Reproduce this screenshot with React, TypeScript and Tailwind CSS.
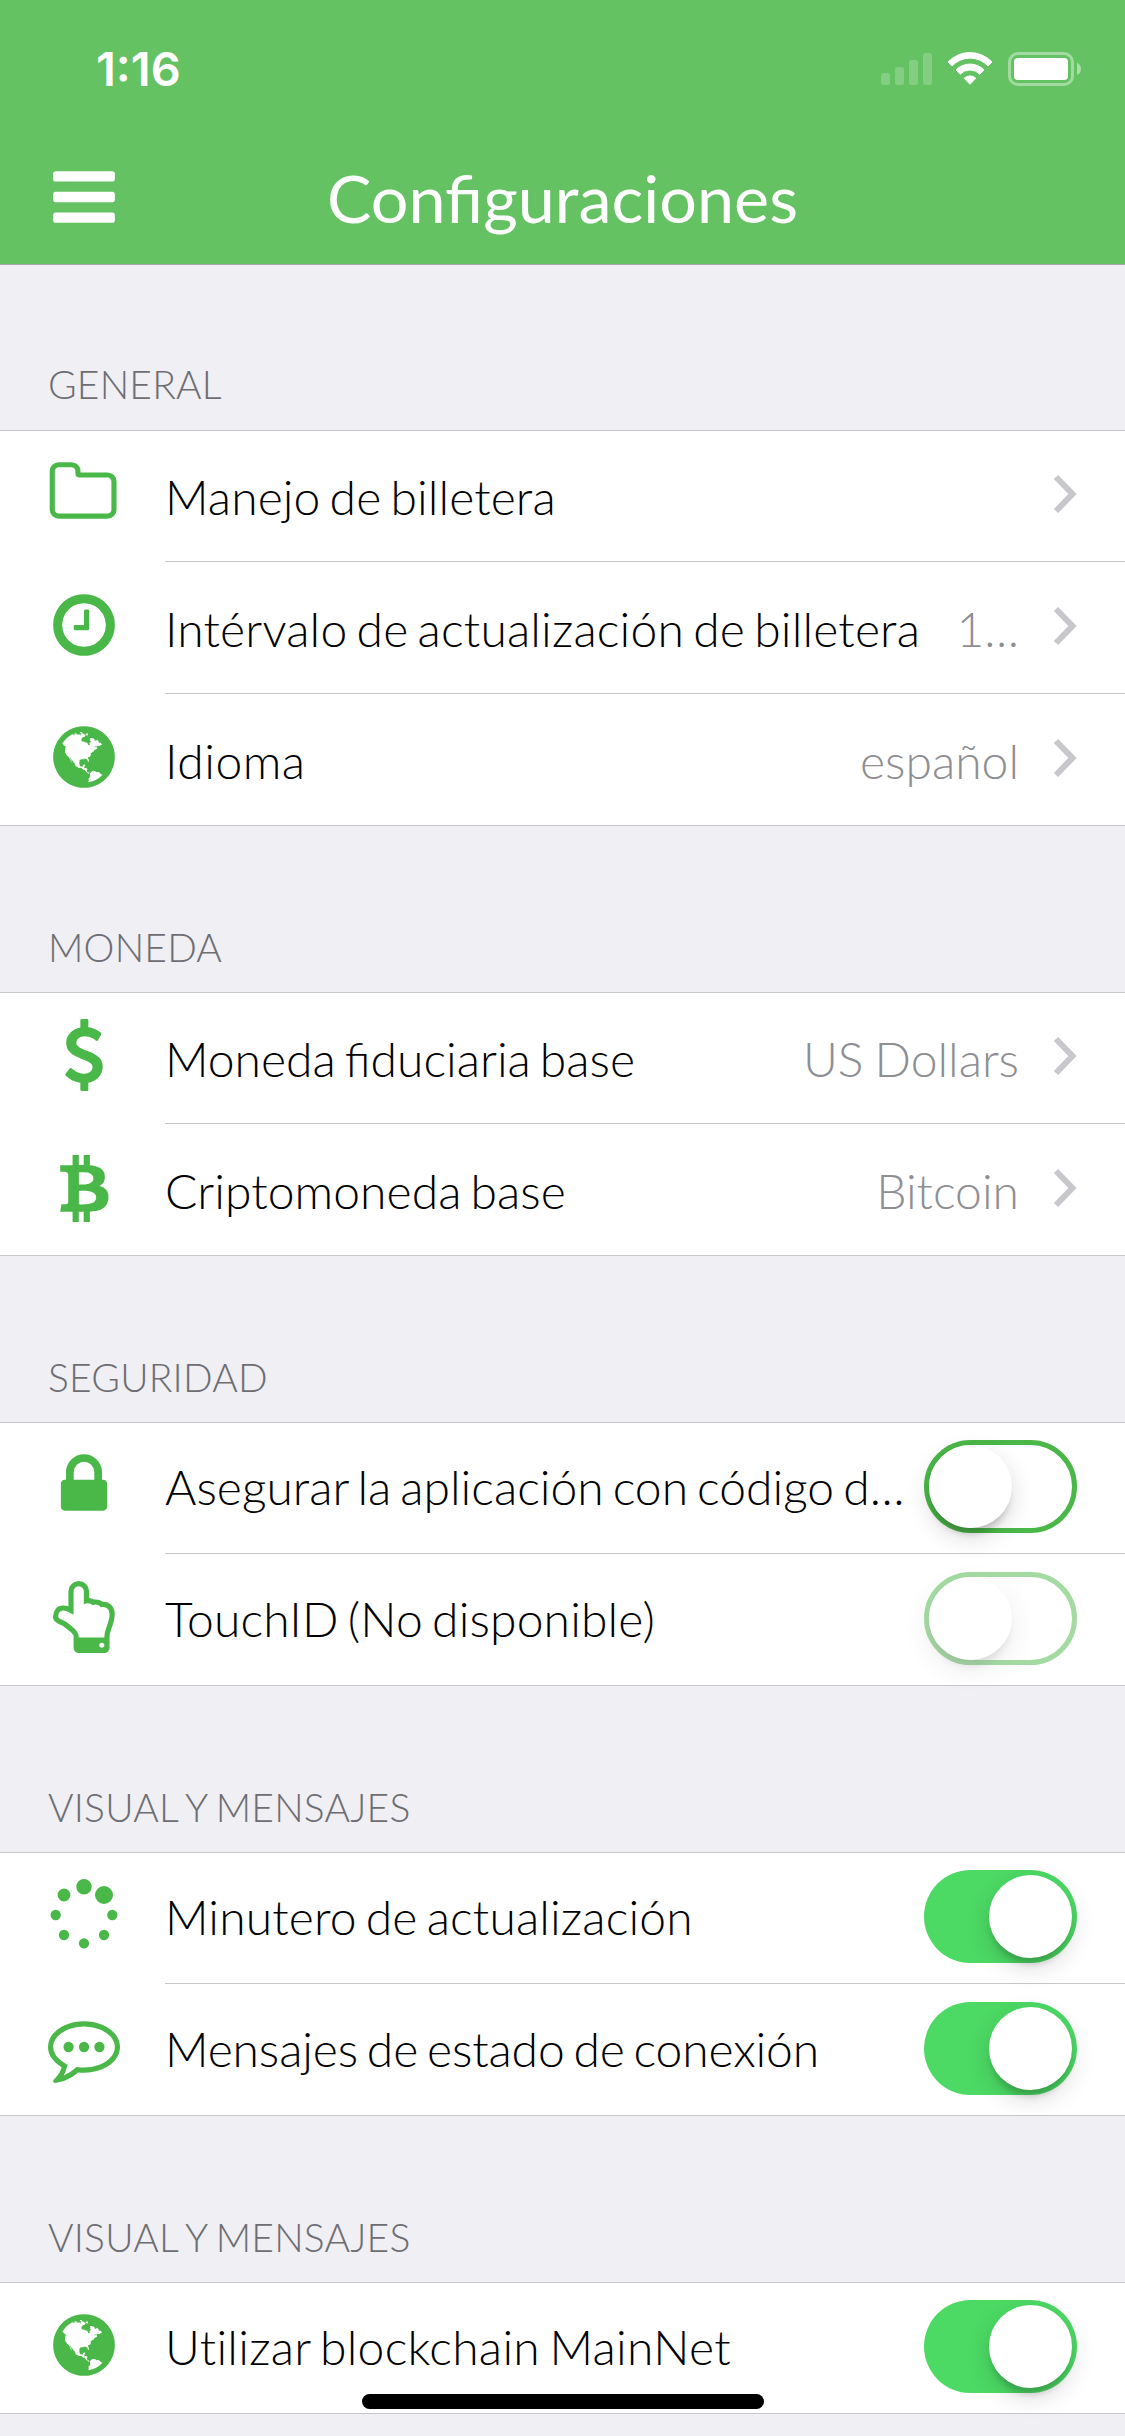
import React from "react";

const PATHS = {
  folder:
    "M1600 1312v-704q0-40-28-68t-68-28h-704q-40 0-68-28t-28-68v-64q0-40-28-68t-68-28h-320q-40 0-68 28t-28 68v960q0 40 28 68t68 28h1216q40 0 68-28t28-68zm128-704v704q0 92-66 158t-158 66h-1216q-92 0-158-66t-66-158v-960q0-92 66-158t158-66h320q92 0 158 66t66 158v32h672q92 0 158 66t66 158z",
  clock:
    "M1024 544v448q0 14-9 23t-23 9h-320q-14 0-23-9t-9-23v-64q0-14 9-23t23-9h224v-352q0-14 9-23t23-9h64q14 0 23 9t9 23zm416 352q0-148-73-273t-198-198-273-73-273 73-198 198-73 273 73 273 198 198 273 73 273-73 198-198 73-273zm224 0q0 209-103 385.5t-279.5 279.5-385.5 103-385.5-103-279.5-279.5-103-385.5 103-385.5 279.5-279.5 385.5-103 385.5 103 279.5 279.5 103 385.5z",
  globe:
    "M896 128q209 0 385.5 103t279.5 279.5 103 385.5-103 385.5-279.5 279.5-385.5 103-385.5-103-279.5-279.5-103-385.5 103-385.5 279.5-279.5 385.5-103zm274 521q-2 1-9.5 9.5t-13.5 9.5q2 0 4.5-5t5-11 3.5-7q6-7 22-15 14-6 52-12 34-8 51 11-2-2 9.5-13t14.5-12q3-2 15-4.5t15-7.5l2-22q-12 1-17.5-7t-6.5-21q0 2-6 8 0-7-4.5-8t-11.5 1-9 1q-10-3-15-7.5t-8-16.5-4-15q-2-5-9.5-11t-9.5-10q-1-2-2.5-5.5t-3-6.5-4-5.5-5.5-2.5-7 5-7.5 10-4.5 5q-3-2-6-1.5t-4.5 1-4.5 3-5 3.5q-3 2-8.5 3t-8.5 2q15-5-1-11-10-4-16-3 9-4 7.5-12t-8.5-14h5q-1-4-8.5-8.5t-17.5-8.5-13-6q-8-5-34-9.5t-33-.5q-5 6-4.5 10.5t4 14 3.5 12.5q1 6-5.5 13t-6.5 12q0 7 14 15.5t10 21.5q-3 8-16 16t-16 12q-5 8-1.5 18.5t10.5 16.5q2 2 1.5 4t-3.5 4.5-5.5 4-6.5 3.5l-3 2q-11 5-20.5-6t-13.5-26q-7-25-16-30-23-8-29 1-5-13-41-26-25-9-58-4 6-1 0-15-7-15-19-12 3-6 4-17.5t1-13.5q3-13 12-23 1-1 7-8.5t9.5-13.5.5-6q35 4 50-11 5-5 11.5-17t10.5-17q9-6 14-5.5t14.5 5.5 14.5 5q14 1 15.5-11t-7.5-20q12 1 3-17-4-7-8-9-12-4-27 5-8 4 2 8-1-1-9.5 10.5t-16.5 17.5-16-5q-1-1-5.5-13.5t-9.5-13.5q-8 0-16 15 3-8-11-15t-24-8q19-12-8-27-7-4-20.5-5t-19.5 4q-5 7-5.5 11.5t5 8 10.5 5.5 11.5 4 8.5 3q14 10 8 14-2 1-8.5 3.5t-11.5 4.5-6 4q-3 4 0 14t-2 14q-5-5-9-17.5t-7-16.5q7 9-25 6l-10-1q-4 0-16 2t-20.5 1-13.5-8q-4-8 0-20 1-4 4-2-4-3-11-9.5t-10-8.5q-46 15-94 41 6 1 12-1 5-2 13-6.5t10-5.5q34-14 42-7l5-5q14 16 20 25-7-4-30-1-20 6-22 12 7 12 5 18-4-3-11.5-10t-14.5-11-15-5q-16 0-22 1-146 80-235 222 7 7 12 8 4 1 5 9t2.5 11 11.5-3q9 8 3 19 1-1 44 27 19 17 21 21 3 11-10 18-1-2-9-9t-9-4q-3 5 .5 18.5t10.5 12.5q-7 0-9.5 16t-2.5 35.5-1 23.5l2 1q-3 12 5.5 34.5t21.5 19.5q-13 3 20 43 6 8 8 9 3 2 12 7.5t15 10 10 10.5q4 5 10 22.5t14 23.5q-2 6 9.5 20t10.5 23q-1 0-2.5 1t-2.5 1q3 7 15.5 14t15.5 13q1 3 2 10t3 11 8 2q2-20-24-62-15-25-17-29-3-5-5.5-15.5t-4.5-14.5q2 0 6 1.5t8.5 3.5 7.5 4 2 3q-3 7 2 17.5t12 18.5 17 19 12 13q6 6 14 19.5t0 13.5q9 0 20 10.5t17 19.5q5 8 8 26t5 24q2 7 8.5 13.5t12.5 9.5l16 8 13 7q5 2 18.5 10.5t21.5 11.5q10 4 16 4t14.5-2.5 13.5-3.5q15-2 29 15t21 21q36 19 55 11-2 1 .5 7.5t8 15.5 9 14.5 5.5 8.5q5 6 18 15t18 15q6-4 7-9-3 8 7 20t18 10q14-3 14-32-31 15-49-18 0-1-2.5-5.5t-4-8.5-2.5-8.5 0-7.5 5-3q9 0 10-3.5t-2-12.5-4-13q-1-8-11-20t-12-15q-5 9-16 8t-16-9q0 1-1.5 5.5t-1.5 6.5q-13 0-15-1 1-3 2.5-17.5t3.5-22.5q1-4 5.5-12t7.5-14.5 4-12.5-4.5-9.5-17.5-2.5q-19 1-26 20-1 3-3 10.5t-5 11.5-9 7q-7 3-24 2t-24-5q-13-8-22.5-29t-9.5-37q0-10 2.5-26.5t3-25-5.5-24.5q3-2 9-9.5t10-10.5q2-1 4.5-1.5t4.5 0 4-1.5 3-6q-1-1-4-3-3-3-4-3 7 3 28.5-1.5t27.5 1.5q15 11 22-2 0-1-2.5-9.5t-.5-13.5q5 27 29 9 3 3 15.5 5t17.5 5q3 2 7 5.5t5.5 4.5 5-.5 8.5-6.5q10 14 12 24 11 40 19 44 7 3 11 2t4.5-9.5 0-14-1.5-12.5l-1-8v-18l-1-8q-15-3-18.5-12t1.5-18.5 15-18.5q1-1 8-3.5t15.5-6.5 12.5-8q21-19 15-35 7 0 11-9-1 0-5-3t-7.5-5-4.500-2q9-5 2-16 5-3 7.5-11t7.5-10q9 12 21 2 7-8 1-16 5-7 20.5-10.5t18.5-9.5q7 2 8-2t1-12 3-12q4-5 15-9t13-5l17-11q3-4 0-4 18 2 31-11 10-11-6-20 3-6-3-9.5t-15-5.5q3-1 11.5-.5t10.5-1.5q15-10-7-16-17-5-43 12zm-163 877q206-36 351-189-3-3-12.5-4.5t-12.5-3.5q-18-7-24-8 1-7-2.5-13t-8-9-12.5-8-11-7q-2-2-7-6t-7-5.5-7.5-4.5-8.5-2-10 1l-3 1q-3 1-5.5 2.5t-5.5 3-4 3 0 2.5q-21-17-36-22-5-1-11-5.5t-10.5-7-10-1.5-11.5 7q-5 5-6 15t-2 13q-7-5 0-17.5t2-18.5q-3-6-10.5-4.5t-12 4.5-11.5 8.5-9 6.5-8.5 5.5-8.5 7.5q-3 4-6 12t-5 11q-2-4-11.5-6.5t-9.5-5.5q2 10 4 35t5 38q7 31-12 48-27 25-29 40-4 22 12 26 0 7-8 20.5t-7 21.5q0 6 2 16z",
  dollar:
    "M1362 1185q0 153-99.5 263.5t-258.5 136.5v175q0 14-9 23t-23 9h-135q-13 0-22.5-9.5t-9.5-22.5v-175q-66-9-127.5-31t-101.5-44.5-74-48-46.5-37.5-17.5-18q-17-21-2-41l103-135q7-10 23-12 15-2 24 9l2 2q113 99 243 125 37 8 74 8 81 0 142.5-43t61.5-122q0-28-15-53t-33.5-42-58.5-37.5-66-32-80-32.5q-39-16-61.5-25t-61.5-26.5-62.5-31-56.5-35.5-53.5-42.5-43.5-49-35.5-58-21-66.5-8.5-78q0-138 98-242t255-134v-180q0-13 9.5-22.5t22.5-9.5h135q14 0 23 9t9 23v176q57 6 110.5 23t87 33.5 63.5 37.5 39 29 15 14q17 18 5 38l-81 146q-8 15-23 16-14 3-27-7-3-3-14.5-12t-39-26.5-58.5-32-74.5-26-85.5-11.5q-95 0-155 43t-60 111q0 26 8.5 48t29.5 41.5 39.5 33 56 31 60.5 27 70 27.5q53 20 81 31.5t76 35 75.5 42.5 62 50 53 63.5 31.5 76.5 13 94z",
  bitcoin:
    "M1336 614q18 182-131 258 117 28 175 103t45 214q-7 71-32.5 125t-64.5 89-97 58.5-121.5 34.5-145.5 15v255h-154v-251q-80 0-122-1v252h-154v-255q-18 0-54-.5t-55-.5h-200l31-183h111q50 0 58-51v-402h16q-6-1-16-1v-287q-13-68-89-68h-111v-164l212 1q64 0 97-1v-252h154v247q82-2 122-2v-245h154v252q79 7 140 22.5t113 45 82.5 78 36.5 114.5zm-215 545q0-36-15-64t-37-46-57.5-30.5-65.5-18.5-74-9-69-3-64.5 1-47.5 1v338q8 0 37 .5t48 .5 53-1.5 58.5-4 57-8.5 55.5-14 47.5-21 39.5-30 24.5-40 9.5-51zm-71-476q0-33-12.5-58.5t-30.5-42-48-28-55-16.5-61.5-8-58-2.5-54 1-39.5.5v307q5 0 34.5.5t46.5 0 50-2 55-5.5 51.5-11 48.5-18.5 37-27 27-38.5 9-51z",
  lock:
    "M640 768h512v-192q0-106-75-181t-181-75-181 75-75 181v192zm832 96v576q0 40-28 68t-68 28h-960q-40 0-68-28t-28-68v-576q0-40 28-68t68-28h32v-192q0-184 132-316t316-132 316 132 132 316v192h32q40 0 68 28t28 68z",
  hand:
    "M1344 1600q0-26-19-45t-45-19-45 19-19 45 19 45 45 19 45-19 19-45zm128-764q0-189-167-189-26 0-56 5-16-30-52.5-47.5t-73.5-17.5-69 18q-50-53-119-53-25 0-55.5 10t-47.5 25v-331q0-52-38-90t-90-38q-51 0-89.5 39t-38.5 89v576q-20 0-48.5-15t-55-33-68-33-84.5-15q-67 0-97.5 44.5t-30.5 115.5q0 24 139 90 44 24 65 37 64 40 145 112 81 71 106 101 57 69 57 140v32h640v-32q0-72 32-167t64-193.5 32-179.5zm128-5q0 133-69 322-59 164-59 223v288q0 53-37.5 90.5t-90.5 37.5h-640q-53 0-90.5-37.5t-37.5-90.5v-288q0-10-4.5-21.5t-14-23.5-18-22.5-22.5-24-21.5-20.5-21.5-19-17-14q-74-65-129-100-21-13-62-33t-72-37-63-40.5-49.5-55-17.5-69.5q0-125 67-206.5t189-81.5q68 0 128 22v-374q0-104 77-180t181-76q105 0 181 75.5t76 180.5v169q62 4 119 37 21-3 43-3 101 0 178 60 139-1 219.5 85t80.5 227z",
  spinner:
    "M526 1394q0 53-37.5 90.5t-90.5 37.5q-52 0-90-38t-38-90q0-53 37.5-90.5t90.5-37.5 90.5 37.5 37.5 90.5zm498 206q0 53-37.5 90.5t-90.5 37.5-90.5-37.5-37.5-90.5 37.5-90.5 90.5-37.5 90.5 37.5 37.5 90.5zm-704-704q0 53-37.5 90.5t-90.5 37.5-90.5-37.5-37.5-90.5 37.5-90.5 90.5-37.5 90.5 37.5 37.5 90.5zm1202 498q0 52-38 90t-90 38q-53 0-90.5-37.5t-37.5-90.5 37.5-90.5 90.5-37.5 90.5 37.5 37.5 90.5zm-964-996q0 66-47 113t-113 47-113-47-47-113 47-113 113-47 113 47 47 113zm1170 498q0 53-37.5 90.5t-90.5 37.5-90.5-37.5-37.5-90.5 37.5-90.5 90.5-37.5 90.5 37.5 37.5 90.5zm-640-704q0 80-56 136t-136 56-136-56-56-136 56-136 136-56 136 56 56 136zm530 206q0 93-66 158.5t-158 65.5q-93 0-158.5-65.5t-65.5-158.5q0-92 65.5-158t158.5-66q92 0 158 66t66 158z",
  comment:
    "M640 896q0 53-37.5 90.5t-90.5 37.5-90.5-37.5-37.5-90.5 37.5-90.5 90.5-37.5 90.5 37.5 37.5 90.5zm384 0q0 53-37.5 90.5t-90.5 37.5-90.5-37.5-37.5-90.5 37.5-90.5 90.5-37.5 90.5 37.5 37.5 90.5zm384 0q0 53-37.5 90.5t-90.5 37.5-90.5-37.5-37.5-90.5 37.5-90.5 90.5-37.5 90.5 37.5 37.5 90.5zm-512-512q-204 0-381.5 69.5t-282 187.5-104.5 255q0 112 71.5 213.5t201.5 175.5l87 50-27 96q-24 91-70 172 152-63 275-171l43-38 57 6q69 8 130 8 204 0 381.5-69.5t282-187.5 104.5-255-104.5-255-282-187.5-381.5-69.5zm896 512q0 174-120 321.5t-326 233-450 85.5q-70 0-145-8-198 175-460 242-49 14-114 22h-5q-15 0-27-10.5t-16-27.5v-1q-3-4-.5-12t2-10 4.5-9.5l6-9 7-8.5 8-9q7-8 31-34.5t34.5-38 31-39.5 32.5-51 27-59 26-76q-157-89-247.5-220t-90.5-281q0-174 120-321.5t326-233 450-85.5 450 85.5 326 233 120 321.5z",
};

type IconName = keyof typeof PATHS;

/* Glyphs whose advance box is not centred get a shifted view box. */
const VIEW_BOXES: Partial<Record<IconName, string>> = {
  folder: "22 0 1792 1792",
  bitcoin: "-78 0 1792 1792",
  hand: "-60 0 1792 1792",
};

type RowData = {
  icon: IconName;
  label: string;
  tracking?: string;
  value?: string;
  toggle?: "on" | "off" | "disabled";
};

const SECTIONS: { title: string; rows: RowData[] }[] = [
  {
    title: "GENERAL",
    rows: [
      { icon: "folder", label: "Manejo de billetera", tracking: "tracking-[0.1px]" },
      {
        icon: "clock",
        label: "Intérvalo de actualización de billetera",
        tracking: "tracking-[0.17px]",
        value: "1…",
      },
      { icon: "globe", label: "Idioma", tracking: "tracking-[0.5px]", value: "español" },
    ],
  },
  {
    title: "MONEDA",
    rows: [
      { icon: "dollar", label: "Moneda fiduciaria base", value: "US Dollars" },
      { icon: "bitcoin", label: "Criptomoneda base", tracking: "tracking-[0.06px]", value: "Bitcoin" },
    ],
  },
  {
    title: "SEGURIDAD",
    rows: [
      { icon: "lock", label: "Asegurar la aplicación con código d…", toggle: "off" },
      {
        icon: "hand",
        label: "TouchID (No disponible)",
        tracking: "tracking-[0.15px]",
        toggle: "disabled",
      },
    ],
  },
  {
    title: "VISUAL Y MENSAJES",
    rows: [
      {
        icon: "spinner",
        label: "Minutero de actualización",
        tracking: "tracking-[0.14px]",
        toggle: "on",
      },
      {
        icon: "comment",
        label: "Mensajes de estado de conexión",
        tracking: "tracking-[-0.13px]",
        toggle: "on",
      },
    ],
  },
  {
    title: "VISUAL Y MENSAJES",
    rows: [
      {
        icon: "globe",
        label: "Utilizar blockchain MainNet",
        tracking: "tracking-[0.3px]",
        toggle: "on",
      },
    ],
  },
];

function Icon({ name }: { name: IconName }) {
  return (
    <svg
      viewBox={VIEW_BOXES[name] ?? "0 0 1792 1792"}
      className="mt-[27px] size-[72px] shrink-0 overflow-visible fill-[#4ab848]"
    >
      <path d={PATHS[name]} />
    </svg>
  );
}

function Toggle({ state }: { state: "on" | "off" | "disabled" }) {
  const knob =
    "size-[83px] rounded-full bg-white shadow-[0_9px_24px_rgba(0,0,0,0.15),0_9px_6px_-3px_rgba(0,0,0,0.16)]";
  if (state === "on") {
    return (
      <div className="mt-[18px] flex h-[93px] w-[153px] shrink-0 justify-end rounded-full bg-[#4cd964] p-[5px]">
        <div className={knob} />
      </div>
    );
  }
  return (
    <div
      className={
        "mt-[18px] flex h-[93px] w-[153px] shrink-0 rounded-full border-[5px] border-[#4ab848] bg-white " +
        (state === "disabled" ? "opacity-50" : "")
      }
    >
      <div className={knob} />
    </div>
  );
}

function Row({ row, last }: { row: RowData; last: boolean }) {
  return (
    <div className={"flex h-[132px] pl-[48px] " + (last ? "border-b border-[#c8c7cc]" : "")}>
      <Icon name={row.icon} />
      <div
        className={
          "ml-[45px] flex min-w-0 flex-1 items-start pr-[48px] " +
          (last ? "" : "border-b border-[#c8c7cc]")
        }
      >
        <div
          className={
            "flex-1 text-[48px] leading-[58px] whitespace-nowrap text-black [word-spacing:-4px] " +
            (row.toggle ? "mt-[36px] " : "mt-[38px] ") +
            (row.tracking ?? "")
          }
        >
          {row.label}
        </div>
        {row.value && (
          <div className="mt-[38px] text-[48px] leading-[58px] whitespace-nowrap text-[#8e8e93] [word-spacing:-2px]">
            {row.value}
          </div>
        )}
        {row.toggle ? (
          <Toggle state={row.toggle} />
        ) : (
          <svg viewBox="0 0 24 40" className="mt-[44px] ml-[34px] h-[40px] w-[24px] shrink-0">
            <path d="M3 3L19.5 20L3 37" fill="none" stroke="#c7c7cc" strokeWidth="6" />
          </svg>
        )}
      </div>
    </div>
  );
}

function StatusBar() {
  return (
    <div className="flex h-[132px] justify-between pt-[40px] pr-[44px] pl-[96px]">
      <div className="font-[Inter] text-[47px] leading-[58px] font-semibold">1:16</div>
      <svg viewBox="0 0 200 34" className="mt-[12px] h-[34px] w-[200px] fill-white">
        <g opacity="0.2">
          <rect x="0" y="21" width="9" height="12" rx="2.5" />
          <rect x="14" y="15" width="9" height="18" rx="2.5" />
          <rect x="28" y="8" width="9" height="25" rx="2.5" />
          <rect x="42" y="1" width="9" height="32" rx="2.5" />
        </g>
        <g stroke="#fff" strokeWidth="1" strokeLinejoin="round">
          <path d="M67 10A30.300 30.300 0 0 1 111 10L107 14A24.500 24.500 0 0 0 71 14Z" />
          <path d="M75 18A19.500 19.500 0 0 1 103 18L98.800 22.200A13.500 13.500 0 0 0 79.200 22.200Z" />
          <path d="M83.200 26.200A8.500 8.500 0 0 1 94.800 26.200L89 32.300Z" />
        </g>
        <rect
          x="128.500"
          y="1.500"
          width="63"
          height="31"
          rx="8.500"
          fill="none"
          stroke="#fff"
          strokeOpacity="0.4"
          strokeWidth="3"
        />
        <rect x="133" y="6" width="54" height="22" rx="4" />
        <path d="M196 10.700v12.300c2.500-1 4-3.500 4-6.100s-1.500-5.200-4-6.200z" opacity="0.45" />
      </svg>
    </div>
  );
}

export default function App() {
  return (
    <div className="relative h-[2436px] w-[1125px] overflow-hidden bg-[#efeff4] font-['Lato',sans-serif] font-light">
      <header className="h-[265px] border-b border-[#a7a7aa] bg-[#64c263] text-white">
        <StatusBar />
        <div className="grid grid-cols-[72px_1fr_72px] items-start px-[48px]">
          <svg viewBox="0 0 1792 1792" className="mt-[29px] size-[72px] fill-white">
            <rect x="128" y="256" width="1536" height="256" rx="64" />
            <rect x="128" y="768" width="1536" height="256" rx="64" />
            <rect x="128" y="1280" width="1536" height="256" rx="64" />
          </svg>
          <h1 className="mt-[25px] text-center text-[66.5px] leading-[80px] font-normal">
            Configuraciones
          </h1>
        </div>
      </header>
      <main>
        {SECTIONS.map((section, i) => (
          <section key={i}>
            <h2
              className={
                "flex items-end pl-[48px] text-[39px] leading-[47px] tracking-[0.2px] text-[#6d6d72] [word-spacing:-2px] " +
                (i === 0 ? "h-[165px] pb-[22px]" : "h-[166px] pb-[21px]")
              }
            >
              {section.title}
            </h2>
            <div className="bg-white shadow-[inset_0_1px_0_#c8c7cc]">
              {section.rows.map((row, j) => (
                <Row key={j} row={row} last={j === section.rows.length - 1} />
              ))}
            </div>
          </section>
        ))}
      </main>
      <div className="absolute bottom-[27px] left-[362px] h-[15px] w-[402px] rounded-full bg-black" />
    </div>
  );
}
